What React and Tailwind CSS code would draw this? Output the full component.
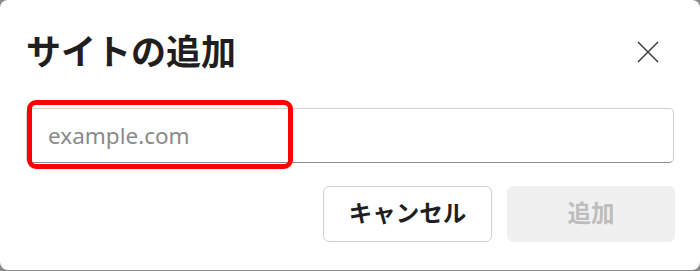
import { useState } from "react";

export default function App() {
    const [site, setSite] = useState("");

    return (
        <div className="w-[700px] h-[271px] bg-[#8a8a8a]">
            <div
                className="w-[700px] h-[270px] bg-white rounded-[8px] px-[26px] pt-[32px]"
                style={{ fontFamily: '"Noto Sans", "Noto Sans CJK JP", sans-serif' }}
            >
                {/* header */}
                <div className="flex items-center justify-between h-[40px]">
                    <h2 className="text-[35px] leading-[40px] font-bold text-[#1f1f1f]">
                        サイトの追加
                    </h2>
                    <button className="w-[40px] h-[40px] flex items-center justify-center mr-[6px]">
                        <svg width="22" height="22" viewBox="0 0 22 22">
                            <path d="M1 1 L21 21 M21 1 L1 21" stroke="#444" strokeWidth="1.6" fill="none" />
                        </svg>
                    </button>
                </div>

                {/* input */}
                <div className="relative mt-[36px]">
                    <input
                        type="text"
                        placeholder="example.com"
                        value={site}
                        onChange={(e) => setSite(e.target.value)}
                        className="w-full h-[55px] border border-[#d1d1d1] border-b-[#8a8a8a] rounded-[5px] pl-[21px] text-[22.5px] text-[#242424] placeholder:text-[#8a8a8a] outline-none"
                    />
                    <div className="absolute left-[1px] top-[-8px] w-[266px] h-[69px] border-[5px] border-[#ff0000] rounded-[9px] pointer-events-none" />
                </div>

                {/* actions */}
                <div className="flex justify-end gap-[15px] mt-[23px]">
                    <button className="w-[169px] h-[56px] border border-[#d1d1d1] rounded-[6px] bg-white text-[23.5px] font-bold text-[#1f1f1f]">
                        キャンセル
                    </button>
                    <button
                        disabled={!site}
                        className="w-[168px] h-[56px] rounded-[6px] bg-[#f0f0f0] text-[23.5px] font-bold text-[#bdbdbd] -mr-[1px]"
                    >
                        追加
                    </button>
                </div>
            </div>
        </div>
    );
}
